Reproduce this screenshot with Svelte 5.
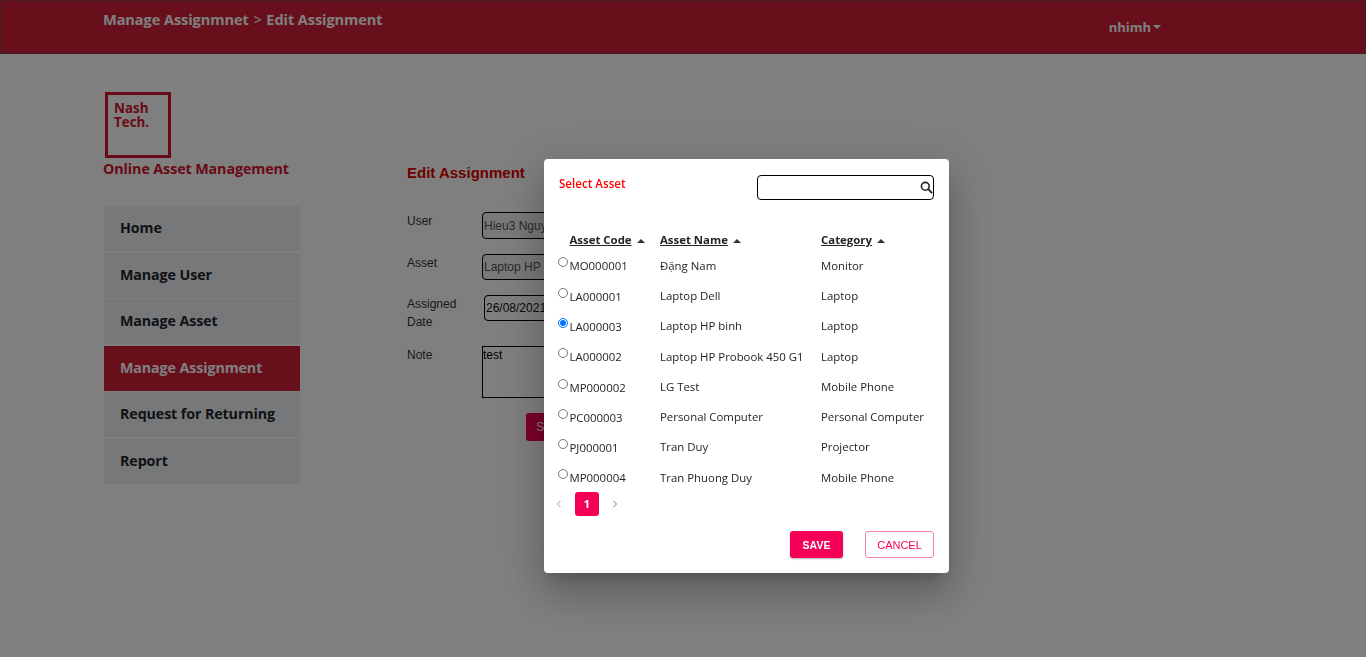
<script>
  const menu = ["Home", "Manage User", "Manage Asset", "Manage Assignment", "Request for Returning", "Report"];
  const assets = [
    { code: "MO000001", name: "Đặng Nam", category: "Monitor" },
    { code: "LA000001", name: "Laptop Dell", category: "Laptop" },
    { code: "LA000003", name: "Laptop HP binh", category: "Laptop" },
    { code: "LA000002", name: "Laptop HP Probook 450 G1", category: "Laptop" },
    { code: "MP000002", name: "LG Test", category: "Mobile Phone" },
    { code: "PC000003", name: "Personal Computer", category: "Personal Computer" },
    { code: "PJ000001", name: "Tran Duy", category: "Projector" },
    { code: "MP000004", name: "Tran Phuong Duy", category: "Mobile Phone" }
  ];
  let selected = "LA000003";
</script>

<header class="topbar">
  <div class="crumb">Manage Assignmnet <span class="sep">&gt;</span> Edit Assignment</div>
  <div class="user">nhimh<span class="caret"></span></div>
</header>

<div class="page">
  <aside class="side">
    <div class="logo"><span>Nash<br />Tech.</span></div>
    <div class="brand">Online Asset Management</div>
    <nav class="menu">
      {#each menu as item}
        <div class="item" class:active={item === "Manage Assignment"}>{item}</div>
      {/each}
    </nav>
  </aside>

  <main class="edit">
    <h2>Edit Assignment</h2>
    <div class="row r-user">
      <span class="lab">User</span>
      <input class="field" value="Hieu3 Nguyen" disabled />
    </div>
    <div class="row r-asset">
      <span class="lab">Asset</span>
      <input class="field" value="Laptop HP binh" disabled />
    </div>
    <div class="row r-date">
      <span class="lab">Assigned<br />Date</span>
      <input class="field date" value="26/08/2021" />
    </div>
    <div class="row r-note">
      <span class="lab">Note</span>
      <textarea class="note">test</textarea>
    </div>
    <button class="submit">Save</button>
  </main>
</div>

<div class="overlay"></div>

<div class="modal">
  <div class="mhead">
    <div class="mtitle">Select Asset</div>
    <div class="search">
      <svg width="13" height="13" viewBox="0 0 14 14">
        <circle cx="5.7" cy="5.7" r="4.2" fill="none" stroke="#222" stroke-width="1.7" />
        <path d="M8.8 8.8 L13 13" stroke="#222" stroke-width="2" fill="none" />
      </svg>
    </div>
  </div>

  <table>
    <thead>
      <tr>
        <th class="c1"><u>Asset Code</u><span class="up"></span></th>
        <th class="c2"><u>Asset Name</u><span class="up"></span></th>
        <th class="c3"><u>Category</u><span class="up"></span></th>
      </tr>
    </thead>
    <tbody>
      {#each assets as a}
        <tr>
          <td class="c1"><input type="radio" name="asset" checked={a.code === selected} />{a.code}</td>
          <td class="c2">{a.name}</td>
          <td class="c3">{a.category}</td>
        </tr>
      {/each}
    </tbody>
  </table>

  <div class="pager">
    <svg width="6" height="8" viewBox="0 0 6 8"><path d="M4.5 .8 L1.5 4 L4.5 7.2" fill="none" stroke="#bbb" stroke-width="1.2" /></svg>
    <span class="num">1</span>
    <svg width="6" height="8" viewBox="0 0 6 8"><path d="M1.5 .8 L4.5 4 L1.5 7.2" fill="none" stroke="#aaa" stroke-width="1.2" /></svg>
  </div>

  <div class="actions">
    <button class="save">SAVE</button>
    <button class="cancel">CANCEL</button>
  </div>
</div>

<style>
  :global(body) {
    margin: 0;
    background: #fff;
    height: 657px;
    overflow: hidden;
    font-family: "Open Sans", "Noto Sans", sans-serif;
  }
  .topbar {
    height: 52px;
    background: #cf1f37;
    border: 1px solid #8a3a46;
    display: flex;
    justify-content: space-between;
    color: #fff;
    font-weight: 700;
    padding-left: 102px;
    padding-right: 204px;
  }
  .crumb {
    font-size: 14.6px;
    padding-top: 9px;
    line-height: 19px;
    letter-spacing: -0.1px;
  }
  .sep {
    font-weight: 400;
    margin: 0 1px;
  }
  .user {
    font-size: 13px;
    padding-top: 17px;
    line-height: 19px;
  }
  .caret {
    display: inline-block;
    border: 4.5px solid transparent;
    border-top-color: #fff;
    border-bottom: 0;
    margin-left: 2px;
    vertical-align: 3px;
  }
  .page {
    display: flex;
  }
  .side {
    margin-left: 103px;
    width: 197px;
    padding-top: 38px;
  }
  .logo {
    box-sizing: border-box;
    margin-left: 2px;
    width: 66px;
    height: 66px;
    border: 3px solid #d3122e;
    font-weight: 700;
    font-size: 13.4px;
    line-height: 14.5px;
    color: #d3122e;
    padding: 5.5px 0 0 6px;
  }
  .brand {
    font-size: 14.3px;
    font-weight: 700;
    color: #d3122e;
    line-height: 20px;
    margin-top: 1px;
    letter-spacing: -0.1px;
  }
  .menu {
    margin-top: 27px;
    margin-left: 1px;
    width: 196px;
  }
  .item {
    height: 45px;
    line-height: 43px;
    margin-bottom: 1.5px;
    padding-left: 16px;
    background: #eff1f4;
    font-weight: 700;
    font-size: 14.25px;
    color: #212529;
    letter-spacing: -0.1px;
  }
  .item.active {
    background: #cf1f37;
    color: #fff;
  }
  .edit {
    margin-left: 107px;
    padding-top: 109px;
    font-family: "Liberation Sans", Arial, sans-serif;
    font-size: 12px;
    color: #333;
    flex: 1;
  }
  h2 {
    margin: 0;
    font-size: 15px;
    line-height: 20px;
    color: #e00000;
  }
  .row {
    display: flex;
  }
  .lab {
    width: 75px;
    line-height: 18px;
  }
  .r-user { margin-top: 29px; }
  .r-asset { margin-top: 15px; }
  .r-date { margin-top: 15px; }
  .r-note { margin-top: 15px; }
  .field {
    box-sizing: border-box;
    width: 260px;
    height: 27px;
    border: 1px solid #000;
    border-radius: 4px;
    background: #f2f2f2;
    font: 12px "Liberation Sans", Arial, sans-serif;
    color: #555;
    padding: 0 1px;
    margin: 0;
  }
  .r-asset .field,
  .r-date .field {
    height: 26px;
  }
  .date {
    margin-left: 2px;
    background: #fff;
    color: #111;
  }
  .note {
    box-sizing: border-box;
    width: 260px;
    height: 52px;
    border: 1px solid #000;
    font: 12px "Liberation Sans", Arial, sans-serif;
    padding: 1px 0;
    margin: 0;
    resize: none;
  }
  .submit {
    display: block;
    margin: 15px 0 0 119px;
    width: 48px;
    height: 28px;
    background: #f50057;
    border: 0;
    border-radius: 3px;
    color: #fff;
    font-size: 12px;
    padding: 0;
  }
  .overlay {
    position: fixed;
    inset: 0;
    background: rgba(0, 0, 0, 0.5);
  }
  .modal {
    position: fixed;
    left: 544px;
    top: 159px;
    width: 405px;
    height: 414px;
    box-sizing: border-box;
    padding: 16px 15px 0;
    background: #fff;
    border-radius: 4px;
    box-shadow: 0 11px 15px -7px rgba(0,0,0,.2), 0 24px 38px 3px rgba(0,0,0,.14), 0 9px 46px 8px rgba(0,0,0,.12);
    color: #212529;
  }
  .mhead {
    display: flex;
    justify-content: space-between;
    align-items: flex-start;
  }
  .mtitle {
    color: #ff0000;
    font-size: 11.6px;
    font-weight: 600;
    line-height: 17px;
  }
  .search {
    box-sizing: border-box;
    width: 177px;
    height: 25px;
    border: 1.5px solid #000;
    border-radius: 4px;
    display: flex;
    justify-content: flex-end;
    align-items: center;
  }
  table {
    border-collapse: collapse;
    table-layout: fixed;
    width: 375px;
    margin-top: 27px;
    font-size: 11.4px;
  }
  th {
    box-sizing: border-box;
    text-align: left;
    font-weight: 700;
    height: 23px;
    padding: 2px 0 0;
  }
  td {
    height: 30.3px;
    padding: 0;
  }
  .c1 { width: 101px; }
  .c2 { width: 161px; }
  th.c1 { padding-left: 10.5px; }
  .up {
    display: inline-block;
    border: 4px solid transparent;
    border-bottom: 4px solid #333;
    border-top: 0;
    margin-left: 5px;
    vertical-align: 1px;
  }
  input[type="radio"] {
    width: 10px;
    height: 10px;
    margin: 0 1.5px 0 -1px;
    vertical-align: 2.5px;
  }
  .pager {
    display: flex;
    align-items: center;
    height: 24px;
    margin: 0 0 0 -3px;
  }
  .num {
    width: 24px;
    height: 24px;
    margin: 0 13px;
    border-radius: 3px;
    background: #f50057;
    color: #fff;
    font-size: 11px;
    font-weight: 700;
    text-align: center;
    line-height: 24px;
  }
  .actions {
    display: flex;
    justify-content: flex-end;
    gap: 22px;
    margin-top: 15px;
  }
  .actions button {
    box-sizing: border-box;
    height: 27px;
    font: 400 11px "Liberation Sans", Arial, sans-serif;
    border-radius: 3px;
    padding: 0;
  }
  .actions .save {
    width: 53px;
    border: 0;
    background: #f50057;
    color: #fff;
    font-weight: 700;
    font-size: 10.5px;
    box-shadow: 0 1px 2px rgba(0,0,0,.3);
  }
  .cancel {
    width: 69px;
    background: #fff;
    border: 1px solid #f783a8;
    color: #f50057;
  }
</style>
